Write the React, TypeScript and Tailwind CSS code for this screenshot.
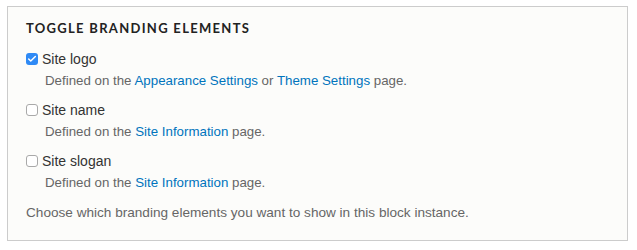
import { Check } from "lucide-react";

type Item = {
  label: string;
  checked: boolean;
  desc: React.ReactNode;
};

const linkCls = "text-[#0074bd]";

const items: Item[] = [
  {
    label: "Site logo",
    checked: true,
    desc: (
      <>
        Defined on the <a className={linkCls}>Appearance Settings</a> or{" "}
        <a className={linkCls}>Theme Settings</a> page.
      </>
    ),
  },
  {
    label: "Site name",
    checked: false,
    desc: (
      <>
        Defined on the <a className={linkCls}>Site Information</a> page.
      </>
    ),
  },
  {
    label: "Site slogan",
    checked: false,
    desc: (
      <>
        Defined on the <a className={linkCls}>Site Information</a> page.
      </>
    ),
  },
];

function Checkbox({ checked }: { checked: boolean }) {
  if (checked) {
    return (
      <span className="w-[12px] h-[12px] rounded-[3px] bg-[#2f8af5] flex items-center justify-center shrink-0">
        <Check size={10} strokeWidth={3.5} color="#fff" />
      </span>
    );
  }
  return (
    <span className="w-[12px] h-[12px] rounded-[3px] bg-white border border-[#a9a9a9] shrink-0" />
  );
}

export default function App() {
  return (
    <div className="w-[637px] h-[250px] bg-white pt-[6px] pl-[7px] font-['Liberation_Sans',Arial,sans-serif]">
      {/* Fieldset */}
      <div className="w-[621px] h-[235px] border border-[#cccccc] bg-[#fcfcfa] pt-[13px] pl-[18px]">
        <h2 className="text-[13px] leading-[16px] font-bold tracking-[0.1em] text-[#222222] font-['Lato',sans-serif]">
          TOGGLE BRANDING ELEMENTS
        </h2>
        <div className="mt-[13px] flex flex-col gap-[10px]">
          {items.map((item) => (
            <div key={item.label}>
              <label className="flex items-center gap-[4px] text-[14px] leading-[20px] text-[#333333]">
                <Checkbox checked={item.checked} />
                {item.label}
              </label>
              <p className="mt-[3px] pl-[19px] text-[13.3px] leading-[18px] text-[#666666]">
                {item.desc}
              </p>
            </div>
          ))}
          <p className="mt-[2px] text-[13.6px] leading-[18px] text-[#666666]">
            Choose which branding elements you want to show in this block instance.
          </p>
        </div>
      </div>
    </div>
  );
}
